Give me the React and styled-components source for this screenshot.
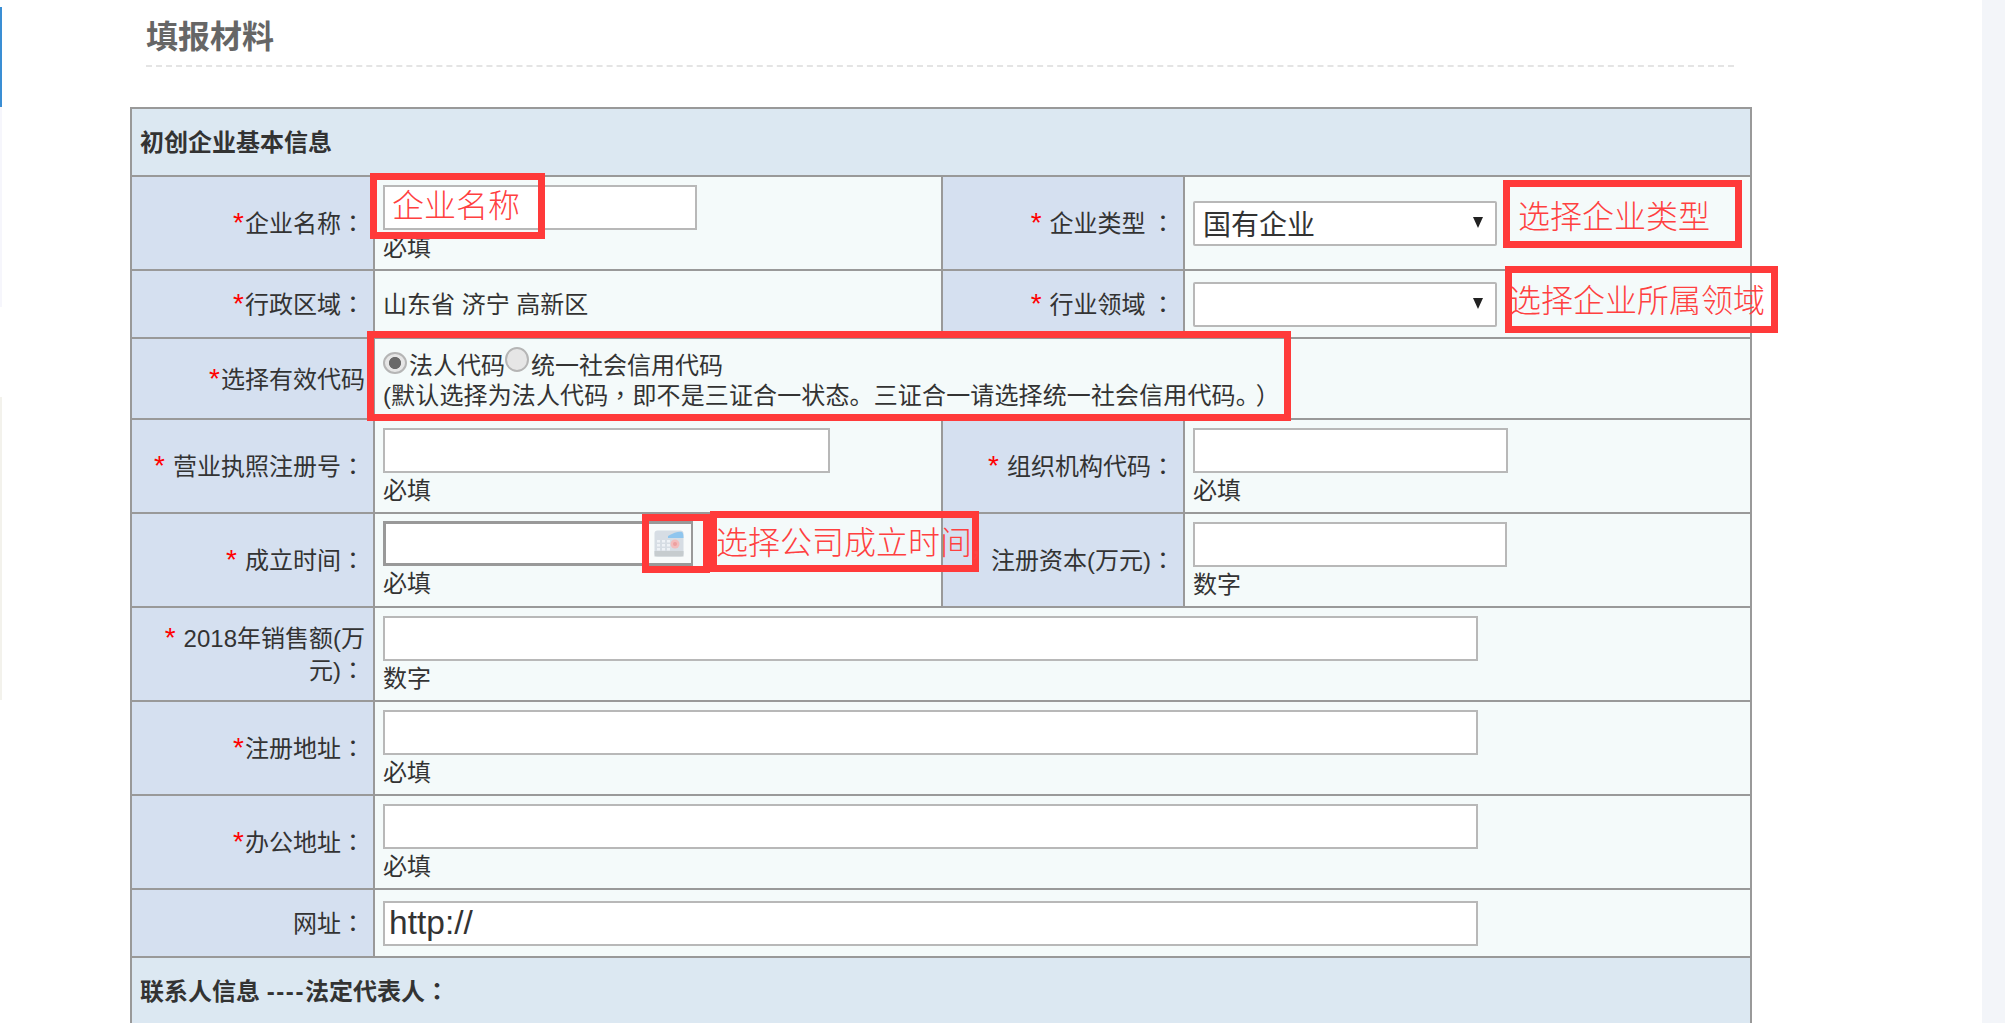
import React from "react";
import styled, { createGlobalStyle } from "styled-components";

const FONT = `"Liberation Sans", "Noto Sans CJK SC", sans-serif`;

const Global = createGlobalStyle`
  html, body { margin: 0; padding: 0; background: #fff; overflow: hidden; }
  #root { height: 1023px; }
`;

const Page = styled.div`
  position: relative;
  display: flex;
  height: 1023px;
  overflow: hidden;
  font-family: ${FONT};
  color: #333;
`;

const Rail = styled.div`
  flex: 0 0 2px;
  display: flex;
  flex-direction: column;
`;
const RailPiece = styled.div`
  height: ${(p) => p.$h}px;
  background: ${(p) => p.$c};
`;

const Main = styled.main`
  flex: 1;
  padding: 14px 0 0 128px;
  min-width: 0;
`;

const SidePanel = styled.aside`
  flex: 0 0 23px;
  background: #f3f5f9;
`;

const Heading = styled.h2`
  margin: 0 0 40px 16px;
  width: 1588px;
  height: 51px;
  box-sizing: content-box;
  border-bottom: 2px dashed #e4e4e4;
  font: bold 32px/40px "Noto Sans CJK SC", sans-serif;
  color: #666;
`;

const Table = styled.table`
  width: 1622px;
  table-layout: fixed;
  border-collapse: collapse;
  font-size: 24px;
  line-height: 32px;
  color: #333;
  td { border: 2px solid #999; }
`;

const Col = styled.col`
  width: ${(p) => p.$w}px;
`;

const Row = styled.tr`
  height: ${(p) => p.$h}px;
`;

const SectionCell = styled.td`
  background: #dce8f2;
  font-weight: bold;
  padding: 2px 8px 0;
`;

const Dashes = styled.span`
  letter-spacing: 1.6px;
`;

const LabelCell = styled.td`
  background: #d5e0f0;
  text-align: right;
  padding: 2px 8px 0;
  vertical-align: middle;
`;

const ValueCell = styled.td`
  background: #f4fafa;
  padding: 0 8px;
  vertical-align: ${(p) => (p.$top ? "top" : "middle")};
  padding-top: ${(p) => (p.$top ? `${p.$top}px` : "0")};
`;

const PlainValue = styled(ValueCell)`
  padding-top: 2px;
`;

const Star = styled.span`
  color: #f00;
  font-size: 28px;
  line-height: 1;
  margin-right: ${(p) => (p.$gap ? "8px" : "1px")};
`;

const Punct = styled.span`
  font-family: "Noto Sans CJK TC", sans-serif;
  line-height: 1;
  margin-left: ${(p) => p.$ml ?? 0}px;
`;

const Field = styled.input`
  display: block;
  box-sizing: border-box;
  width: ${(p) => p.$w}px;
  height: 45px;
  border: 2px solid #b8b8b8;
  background: #fff;
  padding: 0 4px;
  font: 33.5px "Liberation Sans", sans-serif;
  color: #333;
  outline: none;
`;

const Hint = styled.div`
  margin-top: 2px;
  line-height: 32px;
`;

const SelectWrap = styled.div`
  position: relative;
  width: 304px;
  height: 45px;
`;

const Select = styled.select`
  appearance: none;
  box-sizing: border-box;
  width: 100%;
  height: 100%;
  border: 2px solid #b8b8b8;
  border-radius: 2px;
  background: #fff;
  padding: 4px 8px 0;
  font: 28px ${FONT};
  color: #333;
  outline: none;
`;

const SelectArrow = styled.span`
  position: absolute;
  right: 14px;
  top: 16px;
  width: 0;
  height: 0;
  border-left: 5px solid transparent;
  border-right: 5px solid transparent;
  border-top: 11px solid #222;
`;

const DateBox = styled.div`
  display: flex;
  box-sizing: border-box;
  width: 310px;
  height: 45px;
  border: 3px solid #999;
  border-right-width: 2px;
  background: #fff;
`;

const DateInput = styled.input`
  flex: 1;
  min-width: 0;
  border: 0;
  padding: 0;
  background: #fff;
  outline: none;
`;

const DateButton = styled.button`
  flex: 0 0 44px;
  display: flex;
  align-items: center;
  justify-content: center;
  border: 0;
  padding: 0;
  background: #f8fbfb;
`;

const RadioLine = styled.div`
  display: flex;
  align-items: flex-start;
  line-height: 29px;
`;

const Radio = styled.input`
  appearance: none;
  flex: none;
  box-sizing: border-box;
  width: 24px;
  height: ${(p) => p.$h}px;
  margin: ${(p) => p.$mt}px ${(p) => p.$mr}px 0 0;
  border: 2px solid #b5b5b5;
  border-radius: 50%;
  background: #e6e6e6;
  &:checked {
    background: radial-gradient(circle, #6a6a6a 0 42%, #e6e6e6 48%);
  }
`;

const Note = styled.div`
  margin-top: 1px;
  line-height: 30px;
  letter-spacing: 0.13px;
  white-space: nowrap;
`;

const Callout = styled.div`
  position: absolute;
  box-sizing: border-box;
  left: ${(p) => p.$x}px;
  top: ${(p) => p.$y}px;
  width: ${(p) => p.$w}px;
  height: ${(p) => p.$h}px;
  border: 7px solid #ff3a3a;
  padding-top: ${(p) => p.$pt ?? 0}px;
  text-indent: ${(p) => p.$pl ?? 0}px;
  color: #ff4040;
  font: 300 32px/1 "Noto Sans CJK SC", sans-serif;
  white-space: nowrap;
`;

const CalendarIcon = () => (
  <svg width="30" height="27" viewBox="0 0 30 27">
    <defs>
      <filter id="soft">
        <feGaussianBlur stdDeviation="0.45" />
      </filter>
    </defs>
    <g filter="url(#soft)">
      <rect x="0.5" y="0.5" width="29" height="26" rx="3" fill="#d6dde4" />
      <rect x="0.5" y="21" width="29" height="5.5" fill="#c6cccf" />
      <path d="M14 6 C20 2 26 1 28 2 Q29.5 3 29.5 8 L14 8 Z" fill="#8fc6ee" />
      <g fill="#eef2f6">
        {[3, 8, 13].flatMap((x) =>
          [10, 14, 18].map((y) => <rect key={`${x}-${y}`} x={x} y={y} width="3" height="2.5" />)
        )}
      </g>
      <circle cx="21" cy="14" r="4.5" fill="#f2bcbc" />
      <circle cx="21" cy="14" r="2" fill="#eda0a0" />
    </g>
  </svg>
);

const Label = ({ star, gap, colon = "：", children }) => (
  <LabelCell>
    {star && <Star $gap={gap}>*</Star>}
    {children}
    {colon && <Punct>{colon}</Punct>}
  </LabelCell>
);

const FieldCell = ({ w, hint, colSpan, value }) => (
  <ValueCell $top={8} colSpan={colSpan}>
    <Field $w={w} defaultValue={value} />
    {hint && <Hint>{hint}</Hint>}
  </ValueCell>
);

const SelectCell = ({ value, options }) => (
  <ValueCell>
    <SelectWrap>
      <Select defaultValue={value}>
        {options.map((o) => (
          <option key={o} value={o}>{o}</option>
        ))}
      </Select>
      <SelectArrow />
    </SelectWrap>
  </ValueCell>
);

export default function App() {
  return (
    <Page>
      <Global />
      <Rail>
        <RailPiece $h={7} $c="transparent" />
        <RailPiece $h={100} $c="#3a8ed4" />
        <RailPiece $h={200} $c="#f6f6fc" />
        <RailPiece $h={90} $c="transparent" />
        <RailPiece $h={303} $c="#f3f2ec" />
      </Rail>
      <Main>
        <Heading>填报材料</Heading>
        <Table>
          <colgroup>
            <Col $w={243} />
            <Col $w={568} />
            <Col $w={242} />
            <Col $w={567} />
          </colgroup>
          <tbody>
            <Row $h={68}>
              <SectionCell colSpan={4}>初创企业基本信息</SectionCell>
            </Row>
            <Row $h={94}>
              <Label star>企业名称</Label>
              <FieldCell w={314} hint="必填" />
              <Label star gap colon=" ：">企业类型</Label>
              <SelectCell value="国有企业" options={["国有企业", "民营企业"]} />
            </Row>
            <Row $h={68}>
              <Label star>行政区域</Label>
              <PlainValue>山东省 济宁 高新区</PlainValue>
              <Label star gap colon=" ：">行业领域</Label>
              <SelectCell value="" options={["", "电子信息"]} />
            </Row>
            <Row $h={81}>
              <Label star colon="">选择有效代码</Label>
              <ValueCell colSpan={3} $top={12}>
                <RadioLine>
                  <Radio type="radio" name="code" defaultChecked $h={22} $mt={1} $mr={2} />
                  法人代码
                  <Radio type="radio" name="code" $h={25} $mt={-4} $mr={2} />
                  统一社会信用代码
                </RadioLine>
                <Note>
                  (默认选择为法人代码<Punct>，</Punct>即不是三证合一状态。三证合一请选择统一社会信用代码。<Punct $ml={8}>）</Punct>
                </Note>
              </ValueCell>
            </Row>
            <Row $h={94}>
              <Label star gap>营业执照注册号</Label>
              <FieldCell w={447} hint="必填" />
              <Label star gap>组织机构代码</Label>
              <FieldCell w={315} hint="必填" />
            </Row>
            <Row $h={94}>
              <Label star gap>成立时间</Label>
              <ValueCell $top={7}>
                <DateBox>
                  <DateInput />
                  <DateButton type="button" aria-label="选择日期">
                    <CalendarIcon />
                  </DateButton>
                </DateBox>
                <Hint>必填</Hint>
              </ValueCell>
              <Label>注册资本(万元)</Label>
              <FieldCell w={314} hint="数字" />
            </Row>
            <Row $h={94}>
              <Label star gap>2018年销售额(万元)</Label>
              <FieldCell colSpan={3} w={1095} hint="数字" />
            </Row>
            <Row $h={94}>
              <Label star>注册地址</Label>
              <FieldCell colSpan={3} w={1095} hint="必填" />
            </Row>
            <Row $h={94}>
              <Label star>办公地址</Label>
              <FieldCell colSpan={3} w={1095} hint="必填" />
            </Row>
            <Row $h={68}>
              <Label>网址</Label>
              <ValueCell colSpan={3}>
                <Field $w={1095} defaultValue="http://" />
              </ValueCell>
            </Row>
            <Row $h={68}>
              <SectionCell colSpan={4}>联系人信息 <Dashes>----</Dashes>法定代表人<Punct>：</Punct></SectionCell>
            </Row>
          </tbody>
        </Table>
      </Main>
      <SidePanel />
      <Callout $x={370} $y={173} $w={175} $h={66} $pl={15} $pt={7}>企业名称</Callout>
      <Callout $x={1503} $y={180} $w={239} $h={68} $pl={8} $pt={11}>选择企业类型</Callout>
      <Callout $x={1505} $y={266} $w={273} $h={67} $pl={-3} $pt={9}>选择企业所属领域</Callout>
      <Callout $x={367} $y={331} $w={924} $h={90} />
      <Callout $x={642} $y={514} $w={68} $h={59} />
      <Callout $x={710} $y={511} $w={269} $h={61} $pl={-1} $pt={6}>选择公司成立时间,</Callout>
    </Page>
  );
}
